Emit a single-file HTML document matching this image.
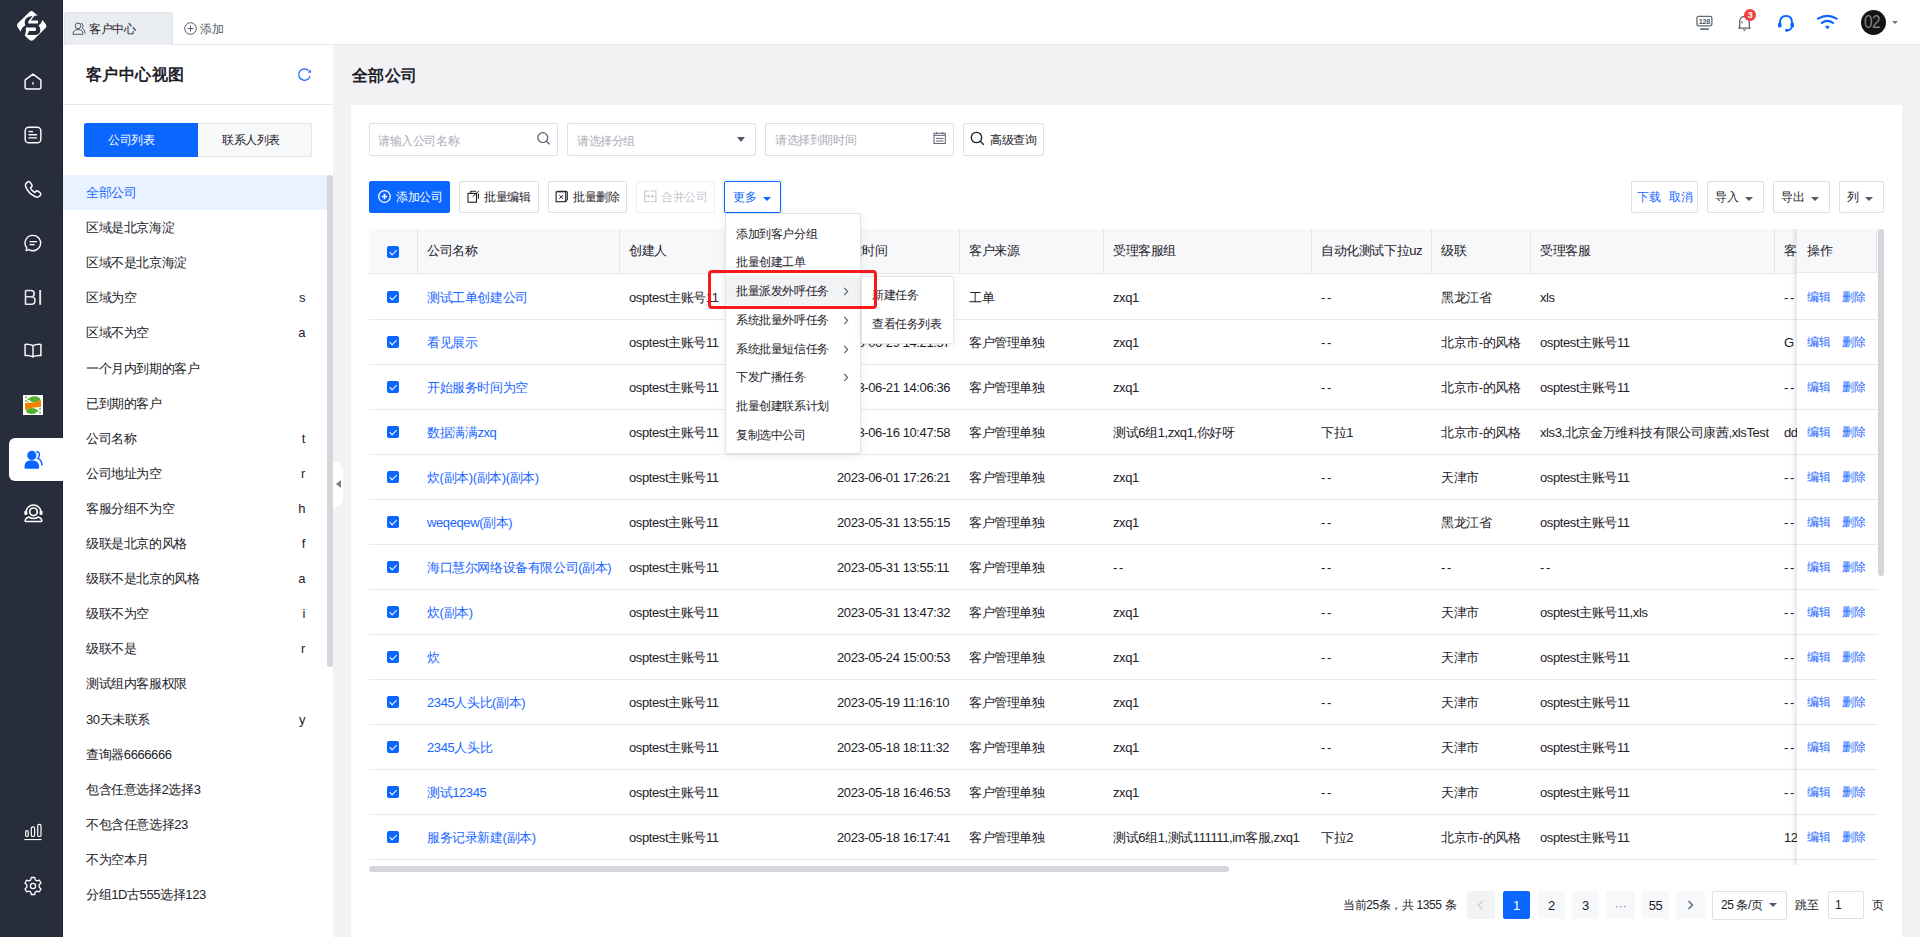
<!DOCTYPE html><html><head><meta charset="utf-8"><style>
*{box-sizing:border-box;margin:0;padding:0}
html,body{width:1920px;height:937px;overflow:hidden;background:#fff;font-family:"Liberation Sans",sans-serif;color:#1d2129;font-size:13px;letter-spacing:-0.4px}
.a{position:absolute}
#side{left:0;top:0;width:63px;height:937px;background:#282d3c;border-right:1px solid #1f2330}
#side svg{position:absolute}
#tabs{left:63px;top:0;width:1857px;height:45px;background:#fff;border-bottom:1px solid #e6e8eb}
#left{left:63px;top:45px;width:270px;height:892px;background:#fff}
#main{left:333px;top:45px;width:1587px;height:892px;background:#f1f2f4}
#card{left:351px;top:105px;width:1551px;height:832px;background:#fff}
.inp{position:absolute;top:123px;height:33px;border:1px solid #dcdfe6;border-radius:2px;background:#fff;color:#a9adb5;font-size:12px;line-height:33px;padding-left:9px;white-space:nowrap}
.btn{position:absolute;top:181px;height:32px;border:1px solid #dcdfe6;border-radius:2px;background:#fff;font-size:12px;line-height:30px;color:#1d2129;white-space:nowrap}
.li{position:absolute;left:63px;width:264px;height:35px;line-height:35px;padding-left:23px;font-size:13px;color:#1d2129;white-space:nowrap}
.li span{position:absolute;right:22px;top:0;font-size:13px}
.th{position:absolute;top:229px;height:44px;line-height:44px;font-size:13px;color:#1d2129;white-space:nowrap}
.td{position:absolute;height:45px;line-height:47px;font-size:13px;color:#1d2129;white-space:nowrap;overflow:hidden}
.lk{color:#1a66ff}
.num{letter-spacing:-0.3px}
.cb{position:absolute;width:12px;height:12px;background:#0a66ff;border-radius:2px}
.cb:after{content:"";position:absolute;left:3.8px;top:1.6px;width:3.2px;height:6.4px;border:solid #fff;border-width:0 1.8px 1.8px 0;transform:rotate(45deg)}
.vl{position:absolute;top:229px;width:1px;height:44px;background:#e5e6eb}
.hl{position:absolute;left:369px;width:1509px;height:1px;background:#e8eaf0}
.mi{position:absolute;left:726px;width:134px;height:29px;line-height:29px;padding-left:10px;font-size:12px;color:#1d2129;white-space:nowrap}
.chev{position:absolute;left:117px;top:0;width:6px;height:29px}
.pg{position:absolute;top:891px;height:28px;line-height:30px;text-align:center;font-size:13px;background:#f7f8fa;border-radius:2px;color:#1d2129}
</style></head><body>
<div id="side" class="a"></div>
<div id="tabs" class="a"></div>
<div id="left" class="a"></div>
<div id="main" class="a"></div>
<div id="card" class="a"></div>
<svg class="a" style="left:14px;top:9px" width="36" height="36" viewBox="0 0 36 36"><g fill="#fff"><path id="lp" d="M23.6 6.6 L19.6 2.9 Q17.5 1.3 15.4 2.9 L3.6 14.5 Q2.3 16.3 3.5 18 L6.6 22.8 Q7.5 18.4 11.3 16.5 Q9.8 12.5 12 9.5 Q14.5 6.8 18.6 6.9 L14.3 12.5 L14.3 14.5 L23.8 14.5 Q24.6 13 23.8 11.5 L16.8 11.5 L20.6 6.8 Z"/><path d="M10.8 26.8 L15.5 31 Q17.5 32.6 19.5 31 L31.8 18.7 Q33 17 31.8 15.3 L28.4 11 Q27.5 15 24.6 16.6 Q27.2 19.5 25.8 23.5 Q24.5 26 21 26 L13.4 26 L14.9 22.1 L21.5 22.1 Q22.6 20.3 21.5 18.5 L11.9 18.5 L11.9 22.4 Z"/></g></svg><svg class="a" style="left:24px;top:72.5px" width="18" height="17.1" viewBox="0 0 20 19"><path d="M10 1.2 L18.2 7.4 Q18.8 7.9 18.8 8.8 L18.8 15.5 Q18.8 17.8 16.5 17.8 L3.5 17.8 Q1.2 17.8 1.2 15.5 L1.2 8.8 Q1.2 7.9 1.8 7.4 Z" fill="none" stroke="#fff" stroke-width="1.6" stroke-linejoin="round"/><rect x="9.3" y="10" width="1.4" height="3" fill="#fff"/></svg><svg class="a" style="left:24px;top:125.5px" width="18" height="18" viewBox="0 0 20 20"><rect x="1.3" y="1.3" width="17.4" height="17.4" rx="4" fill="none" stroke="#fff" stroke-width="1.6"/><rect x="5" y="5.5" width="5" height="1.4" fill="#fff"/><rect x="5" y="8.9" width="9.5" height="1.6" fill="#fff"/><rect x="5" y="12.5" width="9.5" height="1.4" fill="#fff"/></svg><svg class="a" style="left:23px;top:180px" width="20" height="19" viewBox="0 0 20 20"><path d="M4.5 2 Q6 1 7 2.5 L8.8 5.2 Q9.5 6.5 8.3 7.4 L7.2 8.2 Q8.8 11.8 12 13.2 L12.9 12 Q13.8 10.9 15 11.6 L17.5 13.4 Q18.9 14.6 17.8 16 L16.5 17.4 Q15 18.6 12.5 17.6 Q4.8 14 2.2 6.5 Q1.6 4.2 3.2 3 Z" fill="none" stroke="#fff" stroke-width="1.6" stroke-linejoin="round"/></svg><svg class="a" style="left:24px;top:233.5px" width="18.5" height="18.5" viewBox="0 0 20 20"><path d="M10 1.5 A8.3 8.3 0 1 1 5.2 16.8 L2.2 18 L3 15 A8.3 8.3 0 0 1 10 1.5 Z" fill="none" stroke="#fff" stroke-width="1.5" stroke-linejoin="round"/><rect x="6" y="7.6" width="8" height="1.4" fill="#fff"/><rect x="6" y="10.8" width="5.5" height="1.4" fill="#fff"/></svg><svg class="a" style="left:14px;top:280px" width="36" height="36" viewBox="0 0 36 36"><path d="M11.5 10.5 V24.2 H17.5 Q21 24.2 21 20.5 Q21 16.8 17.2 16.8 H11.5 M11.5 10.5 H17 Q20.2 10.5 20.2 13.8 Q20.2 16.8 17.2 16.8" fill="none" stroke="#e6e7ea" stroke-width="1.6" stroke-linejoin="round"/><rect x="25.2" y="10" width="1.9" height="14.8" fill="#e6e7ea"/></svg><svg class="a" style="left:24px;top:343px" width="18" height="15.3" viewBox="0 0 20 17"><path d="M10 3 Q6.5 1 1.2 1.5 L1.2 14 Q6.5 13.5 10 15.5 Q13.5 13.5 18.8 14 L18.8 1.5 Q13.5 1 10 3 Z M10 3 L10 15.5" fill="none" stroke="#fff" stroke-width="1.6" stroke-linejoin="round"/></svg><svg class="a" style="left:23px;top:395px" width="20" height="20" viewBox="0 0 20 20"><rect width="20" height="20" fill="#fff"/><ellipse cx="11.6" cy="4.2" rx="5.6" ry="2.9" fill="#52b02f"/><ellipse cx="8.7" cy="16" rx="5.7" ry="2.9" fill="#52b02f"/><path d="M2 8.1 Q11 8.3 18.1 5.1 L18.1 12 Q9 12 2 15.1 Z" fill="#f08300"/><g fill="#52b02f"><rect x="2.2" y="1.5" width="1.6" height="1.6"/><rect x="4.6" y="3.3" width="1.6" height="1.6"/><rect x="2.2" y="5" width="1.6" height="1.6"/><rect x="4.2" y="6.2" width="1.4" height="1.2"/><rect x="16.2" y="13" width="1.6" height="1.6"/><rect x="13.8" y="14.8" width="1.6" height="1.6"/><rect x="16.2" y="16.8" width="1.6" height="1.6"/></g></svg><div class="a" style="left:9px;top:438px;width:54px;height:43px;background:#fff;border-radius:6px 0 0 6px"></div><svg class="a" style="left:23px;top:450px" width="20" height="20" viewBox="0 0 20 20"><circle cx="8.8" cy="5.4" r="4.6" fill="#0a66ff"/><path d="M1.4 17.3 Q1.2 10.5 8.6 10.3 Q16.3 10.5 16.2 17.3 Q16.2 18.6 15 18.7 L2.6 18.7 Q1.4 18.6 1.4 17.3 Z" fill="#0a66ff"/><path d="M13.2 1.8 Q16.6 1.6 16.4 5 Q16.3 7.4 14.8 8.4 Q19.2 10.5 19 15.5" fill="none" stroke="#0a66ff" stroke-width="1.5"/></svg><svg class="a" style="left:18px;top:498px" width="30" height="30" viewBox="0 0 30 30"><g fill="none" stroke="#fff"><path d="M8 14.5 A7.5 7.5 0 0 1 23 14.5" stroke-width="1.5"/><circle cx="15.5" cy="13.8" r="3.8" stroke-width="1.7"/><path d="M10.5 19 Q13 20.6 15.5 20.6 Q18 20.6 20.5 19 Q23.6 20.4 23.9 22.3 Q24 23.6 22.5 23.6 L8.5 23.6 Q7 23.6 7.1 22.3 Q7.4 20.4 10.5 19 Z" stroke-width="1.5" stroke-linejoin="round"/></g><rect x="6.3" y="12.8" width="3.1" height="4.2" rx="1.3" fill="#fff"/><rect x="21.5" y="12.8" width="3.1" height="4.2" rx="1.3" fill="#fff"/></svg><svg class="a" style="left:23px;top:823px" width="20" height="18" viewBox="0 0 20 18"><g fill="none" stroke="#fff" stroke-width="1.2"><rect x="2.6" y="7.7" width="2.6" height="5.8" rx="1.3"/><rect x="8.3" y="3.8" width="3.3" height="9.7" rx="1.6"/><rect x="14.7" y="1.3" width="3.3" height="12.2" rx="1.6"/></g><rect x="1.3" y="16" width="17.3" height="1.1" fill="#fff"/></svg><svg class="a" style="left:23px;top:876px" width="20" height="20" viewBox="0 0 20 20"><path d="M8.3 1.5 L11.7 1.5 L12.2 3.9 L14 4.9 L16.3 4.1 L18 7 L16.2 8.7 L16.2 11.3 L18 13 L16.3 15.9 L14 15.1 L12.2 16.1 L11.7 18.5 L8.3 18.5 L7.8 16.1 L6 15.1 L3.7 15.9 L2 13 L3.8 11.3 L3.8 8.7 L2 7 L3.7 4.1 L6 4.9 L7.8 3.9 Z" fill="none" stroke="#fff" stroke-width="1.3" stroke-linejoin="round"/><circle cx="10" cy="10" r="2.6" fill="none" stroke="#fff" stroke-width="1.3"/></svg>
<div class="a" style="left:64px;top:12px;width:109px;height:33px;background:#e9ecf0;border:1px solid #dfe2e6;border-bottom:none;border-radius:3px 3px 0 0"></div>
<svg class="a" style="left:72px;top:22px" width="14" height="13" viewBox="0 0 14 13"><circle cx="6" cy="3.8" r="2.8" fill="none" stroke="#4e5969" stroke-width="1"/><path d="M1 12.3 Q1 7.5 6 7.5 Q11 7.5 11 12.3 Z" fill="none" stroke="#4e5969" stroke-width="1" stroke-linejoin="round"/><path d="M9 1.2 Q11 1.5 11 3.8 Q11 5.5 10 6.3 Q13 7.5 13 11.5" fill="none" stroke="#4e5969" stroke-width="1"/></svg>
<div class="a" style="left:89px;top:19px;height:20px;line-height:20px;font-size:12px;color:#1d2129">客户中心</div>
<svg class="a" style="left:184px;top:22px" width="13" height="13" viewBox="0 0 13 13"><circle cx="6.5" cy="6.5" r="5.8" fill="none" stroke="#4e5969" stroke-width="1"/><path d="M6.5 3.5 V9.5 M3.5 6.5 H9.5" stroke="#4e5969" stroke-width="1"/></svg>
<div class="a" style="left:200px;top:19px;height:20px;line-height:20px;font-size:12px;color:#4e5969">添加</div>
<svg class="a" style="left:1695px;top:15px" width="19" height="16" viewBox="0 0 19 16"><rect x="1.9" y="1.4" width="15" height="9.5" rx="1.8" fill="none" stroke="#636a78" stroke-width="1.3"/><rect x="5.2" y="13.2" width="8.6" height="1.7" fill="#636a78"/><text x="9.4" y="8.9" font-size="7.2" font-family="Liberation Sans" font-weight="bold" text-anchor="middle" fill="#4e5563" letter-spacing="-0.3">128</text></svg>
<svg class="a" style="left:1737px;top:15px" width="15" height="17" viewBox="0 0 15 17"><path d="M7.5 1.5 Q12.3 1.5 12.3 7 L12.3 12.2 L13.2 13.2 L1.8 13.2 L2.7 12.2 L2.7 7 Q2.7 1.5 7.5 1.5 Z" fill="none" stroke="#5c6371" stroke-width="1.3" stroke-linejoin="round"/><path d="M5.5 14.5 L7.5 16.3 L9.5 14.5 Z" fill="#6b7280"/><rect x="4.5" y="6" width="1" height="2.5" fill="#6b7280"/></svg>
<div class="a" style="left:1744px;top:9px;width:12px;height:12px;border-radius:6px;background:#f0413c;color:#fff;font-size:9px;line-height:12px;text-align:center;font-weight:bold">3</div>
<svg class="a" style="left:1777px;top:14px" width="18" height="18" viewBox="0 0 18 18"><path d="M3 10.5 L3 8.5 Q3 2 9 2 Q15 2 15 8.5 L15 10.5" fill="none" stroke="#0a66ff" stroke-width="2"/><rect x="1" y="8.5" width="3.5" height="5" rx="1.5" fill="#0a66ff"/><rect x="13.5" y="8.5" width="3.5" height="5" rx="1.5" fill="#0a66ff"/><path d="M15 13 Q14 16 10 16.5" fill="none" stroke="#0a66ff" stroke-width="1.8"/><circle cx="9.5" cy="16.3" r="1.5" fill="#0a66ff"/></svg>
<svg class="a" style="left:1816px;top:14px" width="22" height="16" viewBox="0 0 22 16"><path d="M2 4.6 Q11.3 -1 20.6 4.6" fill="none" stroke="#0a66ff" stroke-width="2.2" stroke-linecap="round"/><path d="M5.8 8.8 Q11.4 4.8 17 8.8" fill="none" stroke="#0a66ff" stroke-width="2.2" stroke-linecap="round"/><path d="M9.6 12.5 Q11.4 11.8 13.2 12.5 L11.4 14.9 Z" fill="#0a66ff" stroke="#0a66ff" stroke-width="1" stroke-linejoin="round"/></svg>
<div class="a" style="left:1861px;top:10px;width:25px;height:25px;border-radius:50%;background:#151314;overflow:hidden"><div style="position:absolute;left:2.5px;top:3px;font-size:18px;line-height:19px;color:#858384;letter-spacing:-0.6px;transform:scaleX(0.85);transform-origin:left">02</div></div>
<div class="a" style="left:1892px;top:21px;width:0;height:0;border-left:3px solid transparent;border-right:3px solid transparent;border-top:3px solid #6b7280"></div>
<div class="a" style="left:86px;top:63px;height:24px;line-height:24px;font-size:16px;font-weight:bold;color:#1d2129;letter-spacing:0.4px">客户中心视图</div>
<svg class="a" style="left:297px;top:67px" width="15" height="15" viewBox="0 0 15 15"><path d="M11.6 3.6 A5.7 5.7 0 1 0 13 9.1" fill="none" stroke="#1a66ff" stroke-width="1.3"/><path d="M10.8 5.4 L14 5.7 L13.7 2.6 Z" fill="#1a66ff"/></svg>
<div class="a" style="left:63px;top:104px;width:270px;height:1px;background:#e6e8eb"></div>
<div class="a" style="left:84px;top:123px;width:114px;height:34px;background:#0a66ff;border-radius:2px 0 0 2px;color:#fff;font-size:12px;line-height:34px;padding-left:24px">公司列表</div>
<div class="a" style="left:198px;top:123px;width:114px;height:34px;background:#f7f8fa;border:1px solid #e5e6eb;border-left:none;border-radius:0 2px 2px 0;color:#1d2129;font-size:12px;line-height:32px;padding-left:24px">联系人列表</div>
<div class="li" style="top:175.0px;background:#e8f3ff;color:#1a66ff">全部公司</div>
<div class="li" style="top:210.1px">区域是北京海淀<span></span></div>
<div class="li" style="top:245.2px">区域不是北京海淀<span></span></div>
<div class="li" style="top:280.3px">区域为空<span>s</span></div>
<div class="li" style="top:315.4px">区域不为空<span>a</span></div>
<div class="li" style="top:350.5px">一个月内到期的客户<span></span></div>
<div class="li" style="top:385.6px">已到期的客户<span></span></div>
<div class="li" style="top:420.7px">公司名称<span>t</span></div>
<div class="li" style="top:455.8px">公司地址为空<span>r</span></div>
<div class="li" style="top:490.9px">客服分组不为空<span>h</span></div>
<div class="li" style="top:526.0px">级联是北京的风格<span>f</span></div>
<div class="li" style="top:561.1px">级联不是北京的风格<span>a</span></div>
<div class="li" style="top:596.2px">级联不为空<span>i</span></div>
<div class="li" style="top:631.3px">级联不是<span>r</span></div>
<div class="li" style="top:666.4px">测试组内客服权限<span></span></div>
<div class="li" style="top:701.5px">30天未联系<span>y</span></div>
<div class="li" style="top:736.6px">查询器6666666<span></span></div>
<div class="li" style="top:771.7px">包含任意选择2选择3<span></span></div>
<div class="li" style="top:806.8px">不包含任意选择23<span></span></div>
<div class="li" style="top:841.9px">不为空本月<span></span></div>
<div class="li" style="top:877.0px">分组1D古555选择123<span></span></div>
<div class="a" style="left:327px;top:175px;width:6px;height:492px;background:#d4d6db;border-radius:3px"></div>
<div class="a" style="left:333px;top:461px;width:10px;height:47px;background:#fff;border-radius:0 10px 10px 0"></div>
<div class="a" style="left:336px;top:480px;width:0;height:0;border-top:4.5px solid transparent;border-bottom:4.5px solid transparent;border-right:5px solid #7a7d83"></div>
<div class="a" style="left:352px;top:64px;height:24px;line-height:24px;font-size:16px;font-weight:bold;color:#1d2129;letter-spacing:0.4px">全部公司</div>
<div class="inp" style="left:369px;width:189px;line-height:35px;padding-left:8px">请输入公司名称</div>
<svg class="a" style="left:536px;top:131px" width="15" height="15" viewBox="0 0 15 15"><circle cx="6.8" cy="6.6" r="4.9" fill="none" stroke="#4e5969" stroke-width="1.2"/><path d="M10.3 10.1 L13.6 13.2" stroke="#4e5969" stroke-width="1.3"/></svg>
<div class="inp" style="left:567px;width:189px;line-height:35px">请选择分组</div>
<div class="a" style="left:737px;top:137px;width:0;height:0;border-left:4px solid transparent;border-right:4px solid transparent;border-top:5px solid #4e5969"></div>
<div class="inp" style="left:765px;width:189px">请选择到期时间</div>
<svg class="a" style="left:932px;top:131px" width="15" height="14" viewBox="0 0 15 14"><g fill="none" stroke="#5c6371" stroke-width="1"><rect x="2" y="2.3" width="11.3" height="10.2"/><path d="M2 4.4 H13.3 M3.9 7.4 H11.5 M3.9 10 H11.5 M4.5 1 V3.2 M10.8 1 V3.2"/></g></svg>
<div class="inp" style="left:963px;width:81px;color:#1d2129;padding-left:26px">高级查询</div>
<svg class="a" style="left:970px;top:131px" width="15" height="15" viewBox="0 0 15 15"><circle cx="6.5" cy="6.5" r="5.2" fill="none" stroke="#1d2129" stroke-width="1.3"/><path d="M10.3 10.3 L13.8 13.8" stroke="#1d2129" stroke-width="1.3"/></svg>
<div class="btn" style="left:369px;width:81px;background:#0a66ff;border-color:#0a66ff;color:#fff;padding-left:26px">添加公司</div>
<svg class="a" style="left:377px;top:189px" width="15" height="15" viewBox="0 0 15 15"><circle cx="7.5" cy="7.5" r="5.8" fill="none" stroke="#fff" stroke-width="1.3"/><path d="M7.5 4.8 V10.2 M4.8 7.5 H10.2" stroke="#fff" stroke-width="1.6"/></svg>
<div class="btn" style="left:459px;width:80px;padding-left:24px">批量编辑</div>
<svg class="a" style="left:466px;top:189px" width="14" height="15" viewBox="0 0 14 15"><g fill="none" stroke="#1d2129" stroke-width="1.1"><rect x="2" y="4.4" width="8.5" height="8.8"/><path d="M4.7 4.4 V2.3 H10.3 M12.4 4.6 V9.7"/><path d="M6.7 7.6 L12.9 2.1" stroke-width="1"/></g></svg>
<div class="btn" style="left:548px;width:79px;padding-left:24px">批量删除</div>
<svg class="a" style="left:554px;top:189px" width="14" height="15" viewBox="0 0 14 15"><g fill="none" stroke="#1d2129" stroke-width="1.1"><rect x="2.1" y="2.8" width="9.6" height="9.9"/><path d="M3.3 2.3 H12.3 L13.3 3.3 V10.5 L11.7 12.2"/><path d="M5.3 6 L9.1 9.8 M9.1 6 L5.3 9.8" stroke-width="1"/></g></svg>
<div class="btn" style="left:636px;width:79px;padding-left:24px;color:#c2c6cd;border-color:#eceef1">合并公司</div>
<svg class="a" style="left:642px;top:189px" width="16" height="15" viewBox="0 0 16 15"><g fill="none" stroke="#c2c6cd" stroke-width="1.1"><path d="M7.7 2 H2.7 V12.7 H7.7 M9 2 H13.9 V12.7 H9 M3.8 7.3 H7.3 M5.9 6 L7.3 7.3 L5.9 8.6 M12.8 7.3 H9.4 M10.8 6 L9.4 7.3 L10.8 8.6"/></g></svg>
<div class="btn" style="left:724px;width:57px;border-color:#0a66ff;color:#0a66ff;padding-left:8px;box-shadow:0 0 0 2px rgba(10,102,255,0.07)">更多</div>
<div class="a" style="left:763px;top:197px;width:0;height:0;border-left:4px solid transparent;border-right:4px solid transparent;border-top:4.5px solid #0a66ff"></div>
<div class="btn" style="left:1631px;width:67px;color:#1a66ff;padding-left:5px;line-height:30px">下载<span style="margin-left:9px">取消</span></div>
<div class="btn" style="left:1707px;width:57px;padding-left:7px;line-height:30px">导入</div>
<div class="a" style="left:1745px;top:197px;width:0;height:0;border-left:4px solid transparent;border-right:4px solid transparent;border-top:4.5px solid #4e5969"></div>
<div class="btn" style="left:1773px;width:57px;padding-left:7px;line-height:30px">导出</div>
<div class="a" style="left:1811px;top:197px;width:0;height:0;border-left:4px solid transparent;border-right:4px solid transparent;border-top:4.5px solid #4e5969"></div>
<div class="btn" style="left:1839px;width:45px;padding-left:7px;line-height:30px">列</div>
<div class="a" style="left:1865px;top:197px;width:0;height:0;border-left:4px solid transparent;border-right:4px solid transparent;border-top:4.5px solid #4e5969"></div>
<div class="a" style="left:369px;top:229px;width:1509px;height:44px;background:#f7f8fa"></div>
<div class="vl" style="left:417px"></div>
<div class="vl" style="left:619px"></div>
<div class="vl" style="left:827px"></div>
<div class="vl" style="left:959px"></div>
<div class="vl" style="left:1103px"></div>
<div class="vl" style="left:1311px"></div>
<div class="vl" style="left:1431px"></div>
<div class="vl" style="left:1530px"></div>
<div class="vl" style="left:1774px"></div>
<div class="th" style="left:427px">公司名称</div>
<div class="th" style="left:629px">创建人</div>
<div class="th" style="left:837px">创建时间</div>
<div class="th" style="left:969px">客户来源</div>
<div class="th" style="left:1113px">受理客服组</div>
<div class="th" style="left:1321px">自动化测试下拉uz</div>
<div class="th" style="left:1441px">级联</div>
<div class="th" style="left:1540px">受理客服</div>
<div class="th" style="left:1784px">客户等级</div>
<div class="cb" style="left:387px;top:246px"></div>
<div class="hl" style="top:273px"></div>
<div class="cb" style="left:387px;top:291px"></div>
<div class="td lk" style="left:427px;top:274px;width:190px">测试工单创建公司</div>
<div class="td" style="left:629px;top:274px;width:196px">osptest主账号11</div>
<div class="td" style="left:837px;top:274px;width:120px">2023-06-29 14:28:37</div>
<div class="td" style="left:969px;top:274px;width:132px">工单</div>
<div class="td" style="left:1113px;top:274px;width:196px">zxq1</div>
<div class="td" style="left:1321px;top:274px;width:108px"><span style="letter-spacing:1.6px">--</span></div>
<div class="td" style="left:1441px;top:274px;width:88px">黑龙江省</div>
<div class="td" style="left:1540px;top:274px;width:232px">xls</div>
<div class="td" style="left:1784px;top:274px;width:14px"><span style="letter-spacing:1.6px">--</span></div>
<div class="hl" style="top:319px"></div>
<div class="cb" style="left:387px;top:336px"></div>
<div class="td lk" style="left:427px;top:319px;width:190px">看见展示</div>
<div class="td" style="left:629px;top:319px;width:196px">osptest主账号11</div>
<div class="td" style="left:837px;top:319px;width:120px">2023-06-29 14:21:57</div>
<div class="td" style="left:969px;top:319px;width:132px">客户管理单独</div>
<div class="td" style="left:1113px;top:319px;width:196px">zxq1</div>
<div class="td" style="left:1321px;top:319px;width:108px"><span style="letter-spacing:1.6px">--</span></div>
<div class="td" style="left:1441px;top:319px;width:88px">北京市-的风格</div>
<div class="td" style="left:1540px;top:319px;width:232px">osptest主账号11</div>
<div class="td" style="left:1784px;top:319px;width:14px">G</div>
<div class="hl" style="top:364px"></div>
<div class="cb" style="left:387px;top:381px"></div>
<div class="td lk" style="left:427px;top:364px;width:190px">开始服务时间为空</div>
<div class="td" style="left:629px;top:364px;width:196px">osptest主账号11</div>
<div class="td" style="left:837px;top:364px;width:120px">2023-06-21 14:06:36</div>
<div class="td" style="left:969px;top:364px;width:132px">客户管理单独</div>
<div class="td" style="left:1113px;top:364px;width:196px">zxq1</div>
<div class="td" style="left:1321px;top:364px;width:108px"><span style="letter-spacing:1.6px">--</span></div>
<div class="td" style="left:1441px;top:364px;width:88px">北京市-的风格</div>
<div class="td" style="left:1540px;top:364px;width:232px">osptest主账号11</div>
<div class="td" style="left:1784px;top:364px;width:14px"><span style="letter-spacing:1.6px">--</span></div>
<div class="hl" style="top:409px"></div>
<div class="cb" style="left:387px;top:426px"></div>
<div class="td lk" style="left:427px;top:409px;width:190px">数据满满zxq</div>
<div class="td" style="left:629px;top:409px;width:196px">osptest主账号11</div>
<div class="td" style="left:837px;top:409px;width:120px">2023-06-16 10:47:58</div>
<div class="td" style="left:969px;top:409px;width:132px">客户管理单独</div>
<div class="td" style="left:1113px;top:409px;width:196px">测试6组1,zxq1,你好呀</div>
<div class="td" style="left:1321px;top:409px;width:108px">下拉1</div>
<div class="td" style="left:1441px;top:409px;width:88px">北京市-的风格</div>
<div class="td" style="left:1540px;top:409px;width:232px">xls3,北京金万维科技有限公司康茜,xlsTest</div>
<div class="td" style="left:1784px;top:409px;width:14px">dd</div>
<div class="hl" style="top:454px"></div>
<div class="cb" style="left:387px;top:471px"></div>
<div class="td lk" style="left:427px;top:454px;width:190px">炊(副本)(副本)(副本)</div>
<div class="td" style="left:629px;top:454px;width:196px">osptest主账号11</div>
<div class="td" style="left:837px;top:454px;width:120px">2023-06-01 17:26:21</div>
<div class="td" style="left:969px;top:454px;width:132px">客户管理单独</div>
<div class="td" style="left:1113px;top:454px;width:196px">zxq1</div>
<div class="td" style="left:1321px;top:454px;width:108px"><span style="letter-spacing:1.6px">--</span></div>
<div class="td" style="left:1441px;top:454px;width:88px">天津市</div>
<div class="td" style="left:1540px;top:454px;width:232px">osptest主账号11</div>
<div class="td" style="left:1784px;top:454px;width:14px"><span style="letter-spacing:1.6px">--</span></div>
<div class="hl" style="top:499px"></div>
<div class="cb" style="left:387px;top:516px"></div>
<div class="td lk" style="left:427px;top:499px;width:190px">weqeqew(副本)</div>
<div class="td" style="left:629px;top:499px;width:196px">osptest主账号11</div>
<div class="td" style="left:837px;top:499px;width:120px">2023-05-31 13:55:15</div>
<div class="td" style="left:969px;top:499px;width:132px">客户管理单独</div>
<div class="td" style="left:1113px;top:499px;width:196px">zxq1</div>
<div class="td" style="left:1321px;top:499px;width:108px"><span style="letter-spacing:1.6px">--</span></div>
<div class="td" style="left:1441px;top:499px;width:88px">黑龙江省</div>
<div class="td" style="left:1540px;top:499px;width:232px">osptest主账号11</div>
<div class="td" style="left:1784px;top:499px;width:14px"><span style="letter-spacing:1.6px">--</span></div>
<div class="hl" style="top:544px"></div>
<div class="cb" style="left:387px;top:561px"></div>
<div class="td lk" style="left:427px;top:544px;width:190px">海口慧尔网络设备有限公司(副本)</div>
<div class="td" style="left:629px;top:544px;width:196px">osptest主账号11</div>
<div class="td" style="left:837px;top:544px;width:120px">2023-05-31 13:55:11</div>
<div class="td" style="left:969px;top:544px;width:132px">客户管理单独</div>
<div class="td" style="left:1113px;top:544px;width:196px"><span style="letter-spacing:1.6px">--</span></div>
<div class="td" style="left:1321px;top:544px;width:108px"><span style="letter-spacing:1.6px">--</span></div>
<div class="td" style="left:1441px;top:544px;width:88px"><span style="letter-spacing:1.6px">--</span></div>
<div class="td" style="left:1540px;top:544px;width:232px"><span style="letter-spacing:1.6px">--</span></div>
<div class="td" style="left:1784px;top:544px;width:14px"><span style="letter-spacing:1.6px">--</span></div>
<div class="hl" style="top:589px"></div>
<div class="cb" style="left:387px;top:606px"></div>
<div class="td lk" style="left:427px;top:589px;width:190px">炊(副本)</div>
<div class="td" style="left:629px;top:589px;width:196px">osptest主账号11</div>
<div class="td" style="left:837px;top:589px;width:120px">2023-05-31 13:47:32</div>
<div class="td" style="left:969px;top:589px;width:132px">客户管理单独</div>
<div class="td" style="left:1113px;top:589px;width:196px">zxq1</div>
<div class="td" style="left:1321px;top:589px;width:108px"><span style="letter-spacing:1.6px">--</span></div>
<div class="td" style="left:1441px;top:589px;width:88px">天津市</div>
<div class="td" style="left:1540px;top:589px;width:232px">osptest主账号11,xls</div>
<div class="td" style="left:1784px;top:589px;width:14px"><span style="letter-spacing:1.6px">--</span></div>
<div class="hl" style="top:634px"></div>
<div class="cb" style="left:387px;top:651px"></div>
<div class="td lk" style="left:427px;top:634px;width:190px">炊</div>
<div class="td" style="left:629px;top:634px;width:196px">osptest主账号11</div>
<div class="td" style="left:837px;top:634px;width:120px">2023-05-24 15:00:53</div>
<div class="td" style="left:969px;top:634px;width:132px">客户管理单独</div>
<div class="td" style="left:1113px;top:634px;width:196px">zxq1</div>
<div class="td" style="left:1321px;top:634px;width:108px"><span style="letter-spacing:1.6px">--</span></div>
<div class="td" style="left:1441px;top:634px;width:88px">天津市</div>
<div class="td" style="left:1540px;top:634px;width:232px">osptest主账号11</div>
<div class="td" style="left:1784px;top:634px;width:14px"><span style="letter-spacing:1.6px">--</span></div>
<div class="hl" style="top:679px"></div>
<div class="cb" style="left:387px;top:696px"></div>
<div class="td lk" style="left:427px;top:679px;width:190px">2345人头比(副本)</div>
<div class="td" style="left:629px;top:679px;width:196px">osptest主账号11</div>
<div class="td" style="left:837px;top:679px;width:120px">2023-05-19 11:16:10</div>
<div class="td" style="left:969px;top:679px;width:132px">客户管理单独</div>
<div class="td" style="left:1113px;top:679px;width:196px">zxq1</div>
<div class="td" style="left:1321px;top:679px;width:108px"><span style="letter-spacing:1.6px">--</span></div>
<div class="td" style="left:1441px;top:679px;width:88px">天津市</div>
<div class="td" style="left:1540px;top:679px;width:232px">osptest主账号11</div>
<div class="td" style="left:1784px;top:679px;width:14px"><span style="letter-spacing:1.6px">--</span></div>
<div class="hl" style="top:724px"></div>
<div class="cb" style="left:387px;top:741px"></div>
<div class="td lk" style="left:427px;top:724px;width:190px">2345人头比</div>
<div class="td" style="left:629px;top:724px;width:196px">osptest主账号11</div>
<div class="td" style="left:837px;top:724px;width:120px">2023-05-18 18:11:32</div>
<div class="td" style="left:969px;top:724px;width:132px">客户管理单独</div>
<div class="td" style="left:1113px;top:724px;width:196px">zxq1</div>
<div class="td" style="left:1321px;top:724px;width:108px"><span style="letter-spacing:1.6px">--</span></div>
<div class="td" style="left:1441px;top:724px;width:88px">天津市</div>
<div class="td" style="left:1540px;top:724px;width:232px">osptest主账号11</div>
<div class="td" style="left:1784px;top:724px;width:14px"><span style="letter-spacing:1.6px">--</span></div>
<div class="hl" style="top:769px"></div>
<div class="cb" style="left:387px;top:786px"></div>
<div class="td lk" style="left:427px;top:769px;width:190px">测试12345</div>
<div class="td" style="left:629px;top:769px;width:196px">osptest主账号11</div>
<div class="td" style="left:837px;top:769px;width:120px">2023-05-18 16:46:53</div>
<div class="td" style="left:969px;top:769px;width:132px">客户管理单独</div>
<div class="td" style="left:1113px;top:769px;width:196px">zxq1</div>
<div class="td" style="left:1321px;top:769px;width:108px"><span style="letter-spacing:1.6px">--</span></div>
<div class="td" style="left:1441px;top:769px;width:88px">天津市</div>
<div class="td" style="left:1540px;top:769px;width:232px">osptest主账号11</div>
<div class="td" style="left:1784px;top:769px;width:14px"><span style="letter-spacing:1.6px">--</span></div>
<div class="hl" style="top:814px"></div>
<div class="cb" style="left:387px;top:831px"></div>
<div class="td lk" style="left:427px;top:814px;width:190px">服务记录新建(副本)</div>
<div class="td" style="left:629px;top:814px;width:196px">osptest主账号11</div>
<div class="td" style="left:837px;top:814px;width:120px">2023-05-18 16:17:41</div>
<div class="td" style="left:969px;top:814px;width:132px">客户管理单独</div>
<div class="td" style="left:1113px;top:814px;width:196px">测试6组1,测试111111,im客服,zxq1</div>
<div class="td" style="left:1321px;top:814px;width:108px">下拉2</div>
<div class="td" style="left:1441px;top:814px;width:88px">北京市-的风格</div>
<div class="td" style="left:1540px;top:814px;width:232px">osptest主账号11</div>
<div class="td" style="left:1784px;top:814px;width:14px">12</div>
<div class="hl" style="top:859px"></div>
<div class="a" style="left:1791px;top:229px;width:6px;height:636px;background:linear-gradient(to right,rgba(0,0,0,0),rgba(0,0,0,0.09))"></div>
<div class="a" style="left:1797px;top:229px;width:81px;height:636px;background:#fff"></div>
<div class="a" style="left:1797px;top:229px;width:81px;height:44px;background:#f7f8fa;border-bottom:1px solid #e8eaf0"></div>
<div class="th" style="left:1807px">操作</div>
<div class="vl" style="left:1876px"></div>
<div class="td lk" style="left:1807px;top:274px;font-size:12px">编辑</div>
<div class="td lk" style="left:1842px;top:274px;font-size:12px">删除</div>
<div class="a" style="left:1797px;top:319px;width:81px;height:1px;background:#e8eaf0"></div>
<div class="td lk" style="left:1807px;top:319px;font-size:12px">编辑</div>
<div class="td lk" style="left:1842px;top:319px;font-size:12px">删除</div>
<div class="a" style="left:1797px;top:364px;width:81px;height:1px;background:#e8eaf0"></div>
<div class="td lk" style="left:1807px;top:364px;font-size:12px">编辑</div>
<div class="td lk" style="left:1842px;top:364px;font-size:12px">删除</div>
<div class="a" style="left:1797px;top:409px;width:81px;height:1px;background:#e8eaf0"></div>
<div class="td lk" style="left:1807px;top:409px;font-size:12px">编辑</div>
<div class="td lk" style="left:1842px;top:409px;font-size:12px">删除</div>
<div class="a" style="left:1797px;top:454px;width:81px;height:1px;background:#e8eaf0"></div>
<div class="td lk" style="left:1807px;top:454px;font-size:12px">编辑</div>
<div class="td lk" style="left:1842px;top:454px;font-size:12px">删除</div>
<div class="a" style="left:1797px;top:499px;width:81px;height:1px;background:#e8eaf0"></div>
<div class="td lk" style="left:1807px;top:499px;font-size:12px">编辑</div>
<div class="td lk" style="left:1842px;top:499px;font-size:12px">删除</div>
<div class="a" style="left:1797px;top:544px;width:81px;height:1px;background:#e8eaf0"></div>
<div class="td lk" style="left:1807px;top:544px;font-size:12px">编辑</div>
<div class="td lk" style="left:1842px;top:544px;font-size:12px">删除</div>
<div class="a" style="left:1797px;top:589px;width:81px;height:1px;background:#e8eaf0"></div>
<div class="td lk" style="left:1807px;top:589px;font-size:12px">编辑</div>
<div class="td lk" style="left:1842px;top:589px;font-size:12px">删除</div>
<div class="a" style="left:1797px;top:634px;width:81px;height:1px;background:#e8eaf0"></div>
<div class="td lk" style="left:1807px;top:634px;font-size:12px">编辑</div>
<div class="td lk" style="left:1842px;top:634px;font-size:12px">删除</div>
<div class="a" style="left:1797px;top:679px;width:81px;height:1px;background:#e8eaf0"></div>
<div class="td lk" style="left:1807px;top:679px;font-size:12px">编辑</div>
<div class="td lk" style="left:1842px;top:679px;font-size:12px">删除</div>
<div class="a" style="left:1797px;top:724px;width:81px;height:1px;background:#e8eaf0"></div>
<div class="td lk" style="left:1807px;top:724px;font-size:12px">编辑</div>
<div class="td lk" style="left:1842px;top:724px;font-size:12px">删除</div>
<div class="a" style="left:1797px;top:769px;width:81px;height:1px;background:#e8eaf0"></div>
<div class="td lk" style="left:1807px;top:769px;font-size:12px">编辑</div>
<div class="td lk" style="left:1842px;top:769px;font-size:12px">删除</div>
<div class="a" style="left:1797px;top:814px;width:81px;height:1px;background:#e8eaf0"></div>
<div class="td lk" style="left:1807px;top:814px;font-size:12px">编辑</div>
<div class="td lk" style="left:1842px;top:814px;font-size:12px">删除</div>
<div class="a" style="left:1797px;top:859px;width:81px;height:1px;background:#e8eaf0"></div>
<div class="a" style="left:1878px;top:229px;width:6px;height:347px;background:#d4d6db;border-radius:3px"></div>
<div class="a" style="left:369px;top:866px;width:860px;height:6px;background:#d4d6db;border-radius:4px"></div>
<div class="a" style="left:725px;top:213px;width:136px;height:241px;background:#fff;border:1px solid #e1e4ea;border-radius:2px;box-shadow:0 2px 8px rgba(0,0,0,0.08)"></div>
<div class="a" style="left:726px;top:276px;width:134px;height:29px;background:#f2f3f5"></div>
<div class="mi" style="top:219.7px">添加到客户分组</div>
<div class="mi" style="top:248.4px">批量创建工单</div>
<div class="mi" style="top:277.1px">批量派发外呼任务<svg class="chev" viewBox="0 0 6 29"><path d="M1.3 10.8 L4.6 14.5 L1.3 18.2" fill="none" stroke="#5c6370" stroke-width="1.2"/></svg></div>
<div class="mi" style="top:305.8px">系统批量外呼任务<svg class="chev" viewBox="0 0 6 29"><path d="M1.3 10.8 L4.6 14.5 L1.3 18.2" fill="none" stroke="#5c6370" stroke-width="1.2"/></svg></div>
<div class="mi" style="top:334.5px">系统批量短信任务<svg class="chev" viewBox="0 0 6 29"><path d="M1.3 10.8 L4.6 14.5 L1.3 18.2" fill="none" stroke="#5c6370" stroke-width="1.2"/></svg></div>
<div class="mi" style="top:363.2px">下发广播任务<svg class="chev" viewBox="0 0 6 29"><path d="M1.3 10.8 L4.6 14.5 L1.3 18.2" fill="none" stroke="#5c6370" stroke-width="1.2"/></svg></div>
<div class="mi" style="top:391.9px">批量创建联系计划</div>
<div class="mi" style="top:420.6px">复制选中公司</div>
<div class="a" style="left:861px;top:276px;width:93px;height:68px;background:#fff;border:1px solid #e5e6eb;border-radius:2px;box-shadow:0 2px 8px rgba(0,0,0,0.08)"></div>
<div class="mi" style="left:862px;top:281px;width:90px">新建任务</div>
<div class="mi" style="left:862px;top:309.5px;width:90px">查看任务列表</div>
<div class="a" style="left:708px;top:270px;width:169px;height:39px;border:3px solid #f81a1a;border-radius:4px"></div>
<div class="a" style="left:1343px;top:895px;height:20px;line-height:20px;font-size:12px;color:#1d2129;white-space:nowrap">当前25条，共 1355 条</div>
<div class="pg" style="left:1467px;width:28px;background:#f2f3f5"><svg width="28" height="28" viewBox="0 0 28 28" style="position:absolute;left:0;top:0"><path d="M15.5 10 L11.5 14 L15.5 18" fill="none" stroke="#c9cdd4" stroke-width="1.2"/></svg></div>
<div class="pg" style="left:1503px;width:27px;background:#0a66ff;color:#fff">1</div>
<div class="pg" style="left:1538px;width:27px">2</div>
<div class="pg" style="left:1572px;width:27px">3</div>
<div class="pg" style="left:1606px;width:29px;color:#86909c">···</div>
<div class="pg" style="left:1642px;width:27px">55</div>
<div class="pg" style="left:1676px;width:29px"><svg width="29" height="28" viewBox="0 0 29 28" style="position:absolute;left:0;top:0"><path d="M12.5 10 L16.5 14 L12.5 18" fill="none" stroke="#4e5969" stroke-width="1.2"/></svg></div>
<div class="a" style="left:1712px;top:891px;width:75px;height:29px;border:1px solid #dcdfe6;border-radius:2px;font-size:12px;line-height:27px;padding-left:8px;white-space:nowrap">25 条/页</div>
<div class="a" style="left:1769px;top:903px;width:0;height:0;border-left:4px solid transparent;border-right:4px solid transparent;border-top:4.5px solid #4e5969"></div>
<div class="a" style="left:1795px;top:895px;height:20px;line-height:20px;font-size:12px">跳至</div>
<div class="a" style="left:1828px;top:891px;width:36px;height:28px;border:1px solid #dcdfe6;border-radius:2px;font-size:12px;line-height:26px;padding-left:6px">1</div>
<div class="a" style="left:1872px;top:895px;height:20px;line-height:20px;font-size:12px">页</div>
</body></html>
